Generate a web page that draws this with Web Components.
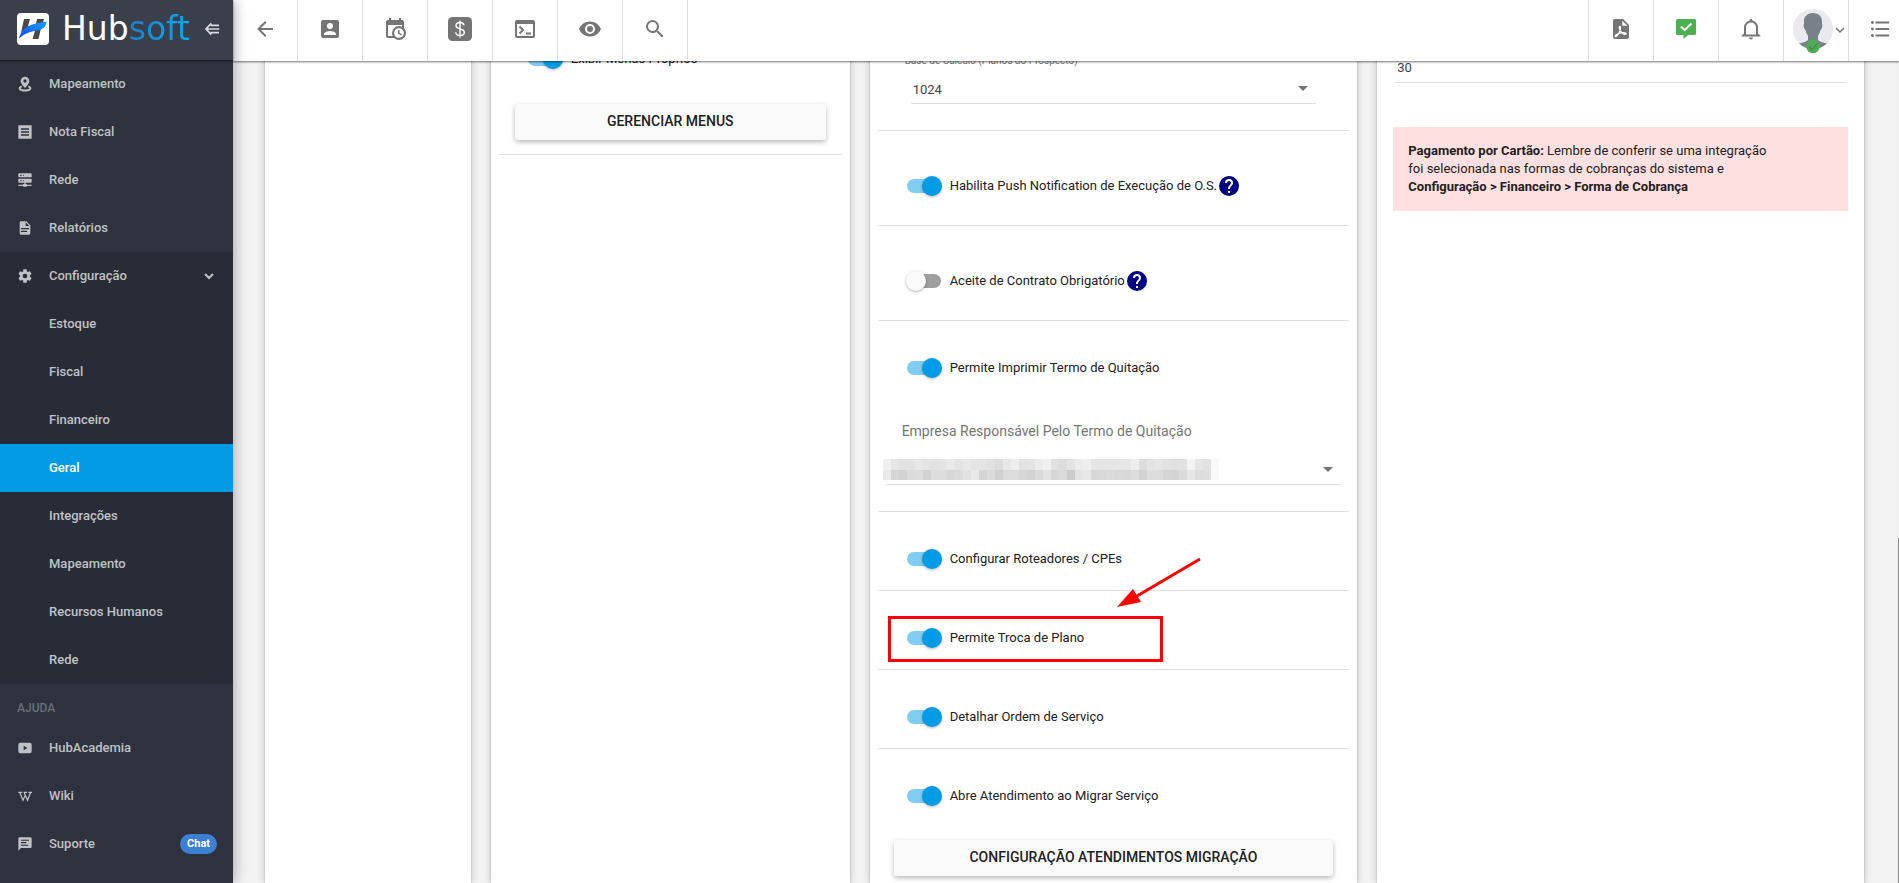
<!DOCTYPE html>
<html lang="pt-BR">
<head>
<meta charset="utf-8">
<title>Hubsoft - Configuração Geral</title>
<style>
  body { margin: 0; font-family: Roboto, "Liberation Sans", sans-serif; font-size: 13px; color: #212121; }
</style>
</head>
<body>
<hub-app>
  <hub-sidebar slot="sidebar">
    <nav-item icon="pin">Mapeamento</nav-item>
    <nav-item icon="receipt">Nota Fiscal</nav-item>
    <nav-item icon="server">Rede</nav-item>
    <nav-item icon="doc">Relatórios</nav-item>
    <nav-group>
      <nav-item icon="gear" expandable>Configuração</nav-item>
      <nav-item>Estoque</nav-item>
      <nav-item>Fiscal</nav-item>
      <nav-item>Financeiro</nav-item>
      <nav-item active>Geral</nav-item>
      <nav-item>Integrações</nav-item>
      <nav-item>Mapeamento</nav-item>
      <nav-item>Recursos Humanos</nav-item>
      <nav-item>Rede</nav-item>
    </nav-group>
    <nav-heading>AJUDA</nav-heading>
    <nav-item icon="video">HubAcademia</nav-item>
    <nav-item icon="wiki">Wiki</nav-item>
    <nav-item icon="message" badge="Chat">Suporte</nav-item>
  </hub-sidebar>

  <hub-toolbar slot="toolbar">
    <tool-button icon="back" label="Voltar"></tool-button>
    <tool-button icon="account" label="Clientes"></tool-button>
    <tool-button icon="schedule" label="Agenda"></tool-button>
    <tool-button icon="money" label="Financeiro"></tool-button>
    <tool-button icon="console" label="Console"></tool-button>
    <tool-button icon="eye" label="Visualizar"></tool-button>
    <tool-button icon="search" label="Pesquisar"></tool-button>
    <tool-button slot="end" icon="pdf" label="Relatórios PDF"></tool-button>
    <tool-button slot="end" icon="check" label="Atendimentos"></tool-button>
    <tool-button slot="end" icon="bell" label="Notificações"></tool-button>
    <tool-button slot="end" icon="avatar" label="Perfil" wide></tool-button>
    <tool-button slot="end" icon="list" label="Menu" last></tool-button>
  </hub-toolbar>

  <hub-card></hub-card>

  <hub-card>
    <setting-row first>
      <hub-toggle checked>Exibir Menus Próprios</hub-toggle>
      <hub-button spaced>Gerenciar Menus</hub-button>
    </setting-row>
  </hub-card>

  <hub-card>
    <setting-row first>
      <hub-select label="Base de Cálculo (Planos do Prospecto)" value="1024" inset></hub-select>
    </setting-row>
    <setting-row tall>
      <hub-toggle checked help>Habilita Push Notification de Execução de O.S.</hub-toggle>
    </setting-row>
    <setting-row tall>
      <hub-toggle help>Aceite de Contrato Obrigatório</hub-toggle>
    </setting-row>
    <setting-row end-flush>
      <hub-toggle checked>Permite Imprimir Termo de Quitação</hub-toggle>
      <hub-select label="Empresa Responsável Pelo Termo de Quitação" redacted></hub-select>
    </setting-row>
    <setting-row>
      <hub-toggle checked>Configurar Roteadores / CPEs</hub-toggle>
    </setting-row>
    <setting-row>
      <hub-toggle checked>Permite Troca de Plano</hub-toggle>
      <hub-callout></hub-callout>
    </setting-row>
    <setting-row>
      <hub-toggle checked>Detalhar Ordem de Serviço</hub-toggle>
    </setting-row>
    <setting-row open>
      <hub-toggle checked>Abre Atendimento ao Migrar Serviço</hub-toggle>
      <hub-button>Configuração Atendimentos Migração</hub-button>
    </setting-row>
  </hub-card>

  <hub-card>
    <hub-input label="Dias" value="30"></hub-input>
    <hub-alert><b>Pagamento por Cartão:</b> Lembre de conferir se uma integração<br>foi selecionada nas formas de cobranças do sistema e<br><b>Configuração &gt; Financeiro &gt; Forma de Cobrança</b></hub-alert>
  </hub-card>
</hub-app>

<script>
const ICONS = {
  pin: '<path fill-rule="evenodd" d="M12 1a6.500 6.500 0 0 1 6.500 6.500C18.500 12 12 18 12 18S5.500 12 5.500 7.500A6.500 6.500 0 0 1 12 1zm0 4a2.500 2.500 0 1 0 0 5 2.500 2.500 0 0 0 0-5z"/><path d="M7 15.500c-6 2.500-3 6.300 5 6.300s11-3.800 5-6.300" fill="none" stroke="currentColor" stroke-width="2.800"/>',
  receipt: '<path fill-rule="evenodd" d="M2 2h20v20H2zM6 6.500v2h12v-2zM6 11v2h12v-2zM6 15.500v2h12v-2z"/>',
  server: '<path fill-rule="evenodd" d="M13 18h1a1 1 0 0 1 1 1h7v2h-7a1 1 0 0 1-1 1h-4a1 1 0 0 1-1-1H2v-2h7a1 1 0 0 1 1-1h1v-2H3a1 1 0 0 1-1-1v-4a1 1 0 0 1 1-1h18a1 1 0 0 1 1 1v4a1 1 0 0 1-1 1h-8zM3 2h18a1 1 0 0 1 1 1v4a1 1 0 0 1-1 1H3a1 1 0 0 1-1-1V3a1 1 0 0 1 1-1zm6 4h1V4H9zm0 8h1v-2H9zM5 4v2h2V4zm0 8v2h2v-2z"/>',
  doc: '<path fill-rule="evenodd" d="M13 9h5.500L13 3.500zM6 2h8l6 6v12a2 2 0 0 1-2 2H6a2 2 0 0 1-2-2V4a2 2 0 0 1 2-2zm9 16v-2H6v2zm3-4v-2H6v2z"/>',
  gear: '<path fill-rule="evenodd" d="M12,15.500A3.500,3.500 0 0,1 8.500,12A3.500,3.500 0 0,1 12,8.500A3.500,3.500 0 0,1 15.500,12A3.500,3.500 0 0,1 12,15.500M19.430,12.970C19.470,12.650 19.500,12.330 19.500,12C19.500,11.670 19.470,11.340 19.430,11L21.540,9.370C21.730,9.220 21.780,8.950 21.660,8.730L19.660,5.270C19.540,5.050 19.270,4.960 19.050,5.050L16.560,6.050C16.040,5.660 15.500,5.320 14.870,5.070L14.500,2.420C14.460,2.180 14.250,2 14,2H10C9.750,2 9.540,2.180 9.500,2.420L9.130,5.070C8.500,5.320 7.960,5.660 7.440,6.050L4.950,5.050C4.730,4.960 4.460,5.050 4.340,5.270L2.340,8.730C2.210,8.950 2.270,9.220 2.460,9.370L4.570,11C4.530,11.340 4.500,11.670 4.500,12C4.500,12.330 4.530,12.650 4.570,12.970L2.460,14.630C2.270,14.780 2.210,15.050 2.340,15.270L4.340,18.730C4.460,18.950 4.730,19.030 4.950,18.950L7.440,17.940C7.960,18.340 8.500,18.680 9.130,18.930L9.500,21.580C9.540,21.820 9.750,22 10,22H14C14.250,22 14.460,21.820 14.500,21.580L14.870,18.930C15.500,18.670 16.040,18.340 16.560,17.940L19.050,18.950C19.270,19.030 19.540,18.950 19.660,18.730L21.660,15.270C21.780,15.050 21.730,14.780 21.540,14.630L19.430,12.970Z"/>',
  video: '<path fill-rule="evenodd" d="M5 4h14a3 3 0 0 1 3 3v10a3 3 0 0 1-3 3H5a3 3 0 0 1-3-3V7a3 3 0 0 1 3-3zm5 4.500v7l5.500-3.500z"/>',
  wiki: '<path d="M2 6.500h6M10 6.500h5M17 6.500h5.500M4 6.500l5 12 3.500-8M10.500 6.500l5.300 12 4.700-12" fill="none" stroke="currentColor" stroke-width="1.800"/>',
  message: '<path fill-rule="evenodd" d="M20 2a2 2 0 0 1 2 2v12a2 2 0 0 1-2 2H6l-4 4V4a2 2 0 0 1 2-2zM6 5.500v1.800h12V5.500zM6 9v2h8V9zm0 4v1.800h11V13z"/>',
  chevron: '<path d="M6 9l6 6 6-6" fill="none" stroke="currentColor" stroke-width="3"/>',
  back: '<path d="M20,11V13H8L13.500,18.500L12.080,19.920L4.160,12L12.080,4.080L13.500,5.500L8,11H20Z"/>',
  account: '<path fill-rule="evenodd" d="M6,17C6,15 10,13.900 12,13.900C14,13.900 18,15 18,17V18H6M15,9A3,3 0 0,1 12,12A3,3 0 0,1 9,9A3,3 0 0,1 12,6A3,3 0 0,1 15,9M3,5V19A2,2 0 0,0 5,21H19A2,2 0 0,0 21,19V5A2,2 0 0,0 19,3H5C3.890,3 3,3.900 3,5Z"/>',
  schedule: '<path fill-rule="evenodd" d="M15,13H16.500V15.820L18.940,17.230L18.190,18.530L15,16.690V13M19,8H5V19H9.670C9.240,18.090 9,17.070 9,16A7,7 0 0,1 16,9C17.070,9 18.090,9.240 19,9.670V8M5,21C3.890,21 3,20.100 3,19V5C3,3.890 3.890,3 5,3H6V1H8V3H16V1H18V3H19A2,2 0 0,1 21,5V11.100C22.240,12.360 23,14.090 23,16A7,7 0 0,1 16,23C14.090,23 12.360,22.240 11.100,21H5M16,11.150A4.850,4.850 0 0,0 11.150,16C11.150,18.680 13.320,20.850 16,20.850A4.850,4.850 0 0,0 20.850,16C20.850,13.320 18.680,11.150 16,11.150Z"/>',
  money: '<rect width="24" height="24" rx="4.500"/><path d="M16 8.200C15.500 6.300 14 5.500 12 5.500c-2.300 0-4 1.200-4 3.100 0 4.600 8.300 2.200 8.300 6.700 0 2-1.800 3.200-4.200 3.200-2.500 0-4.100-1.100-4.500-3.100M12 3.500v17" fill="none" stroke="#fff" stroke-width="1.400"/>',
  console: '<path fill-rule="evenodd" d="M4 3h16a2 2 0 0 1 2 2v14a2 2 0 0 1-2 2H4a2 2 0 0 1-2-2V5a2 2 0 0 1 2-2zm0 4v12h16V7z"/><path d="M6.500 9.500L10 13l-3.500 3.500M13 16.500h5" fill="none" stroke="currentColor" stroke-width="2"/>',
  eye: '<path fill-rule="evenodd" d="M12,9A3,3 0 0,0 9,12A3,3 0 0,0 12,15A3,3 0 0,0 15,12A3,3 0 0,0 12,9M12,17A5,5 0 0,1 7,12A5,5 0 0,1 12,7A5,5 0 0,1 17,12A5,5 0 0,1 12,17M12,4.500C7,4.500 2.730,7.610 1,12C2.730,16.390 7,19.500 12,19.500C17,19.500 21.270,16.390 23,12C21.270,7.610 17,4.500 12,4.500Z"/>',
  search: '<path fill-rule="evenodd" d="M9.500,3A6.500,6.500 0 0,1 16,9.500C16,11.110 15.410,12.590 14.440,13.730L14.710,14H15.500L20.500,19L19,20.500L14,15.500V14.710L13.730,14.440C12.590,15.410 11.110,16 9.500,16A6.500,6.500 0 0,1 3,9.500A6.500,6.500 0 0,1 9.500,3M9.500,5C7,5 5,7 5,9.500C5,12 7,14 9.500,14C12,14 14,12 14,9.500C14,7 12,5 9.500,5Z"/>',
  pdf: '<path d="M6 2h8l6 6v12a2 2 0 0 1-2 2H6a2 2 0 0 1-2-2V4a2 2 0 0 1 2-2z"/><path d="M13.300 3.700V8.800h5.100z" fill="#fff"/><path d="M11 9.500c-1.300 0-.8 2.600.7 4.800 1.600 2.300 4.200 3.500 5.200 2.800 1.200-1-2.400-2-5.900-1-3.300.9-5.400 2.700-4.800 3.400.9 1 3.500-2.700 4.500-5.100.8-2 1.100-4.900.3-4.900z" fill="none" stroke="#fff" stroke-width="1.300"/>',
  check: '<path fill="#4caf50" d="M3.500 2h17A1.500 1.500 0 0 1 22 3.500v13a1.500 1.500 0 0 1-1.500 1.500H14l-4.500 4v-4h-6A1.500 1.500 0 0 1 2 16.500v-13A1.500 1.500 0 0 1 3.500 2z"/><path d="M7 9.500l3.700 3.700L17.500 6.500" fill="none" stroke="#fff" stroke-width="2"/>',
  bell: '<path d="M6 18v-7.500a6 6 0 0 1 12 0V18" fill="none" stroke="currentColor" stroke-width="2"/><path d="M2.500 19.500v-.8L5 16.500v1h14v-1l2.500 2.200v.8zM10 20.500h4a2 2 0 0 1-4 0zM10.500 4.500V3.500a1.500 1.500 0 0 1 3 0v1z"/>',
  list: '<path d="M7 5h15M7 12h15M7 19h15" stroke="currentColor" stroke-width="2.200"/><circle cx="3.700" cy="5" r="1.600"/><circle cx="3.700" cy="12" r="1.600"/><circle cx="3.700" cy="19" r="1.600"/>',
  help: '<path fill-rule="evenodd" d="M15.070,11.250L14.170,12.170C13.450,12.890 13,13.500 13,15H11V14.500C11,13.390 11.450,12.390 12.170,11.670L13.410,10.410C13.780,10.050 14,9.550 14,9C14,7.890 13.100,7 12,7A2,2 0 0,0 10,9H8A4,4 0 0,1 12,5A4,4 0 0,1 16,9C16,9.880 15.640,10.670 15.070,11.250M13,19H11V17H13M12,2A10,10 0 0,0 2,12A10,10 0 0,0 12,22A10,10 0 0,0 22,12C22,6.470 17.500,2 12,2Z"/>',
  collapse: '<path d="M11 3.500L3 12l8 8.500M3 12h20M10 6.500h12.500M10 17.500h12.500" fill="none" stroke="currentColor" stroke-width="2.600"/>'
};
const icon = (name, size) =>
  `<svg width="${size}" height="${size}" viewBox="0 0 24 24" fill="currentColor" aria-hidden="true">${ICONS[name]}</svg>`;

const BASE = ':host,*{box-sizing:border-box}svg{display:block;flex:none}button,select,input{font:inherit;color:inherit}';
function define(name, render) {
  customElements.define(name, class extends HTMLElement {
    connectedCallback() {
      if (this.shadowRoot) return;
      const root = this.attachShadow({ mode: 'open' });
      root.innerHTML = `<style>${BASE}</style>` + render(this);
    }
  });
}

define('hub-app', () => `
  <style>
    :host{display:grid;grid-template:61px 1fr / 233px 1fr;min-height:100vh;background:#f3f3f3;overflow:hidden;position:relative}
    ::slotted([slot=sidebar]){grid-area:1/1/3/2;z-index:3}
    ::slotted([slot=toolbar]){grid-area:1/2/2/3;z-index:2}
    main{grid-area:1/2/3/3;display:grid;grid-template-columns:206fr 359fr 488fr 487fr;column-gap:20px;padding:0 35px 0 32px;min-width:0}
    .scroll{position:absolute;right:0;top:61px;bottom:0;width:3px;background:#f0f0f0}
    .scroll::after{content:"";position:absolute;right:0;top:58%;bottom:0;width:1px;background:#8b8b8b}
  </style>
  <slot name="sidebar"></slot><slot name="toolbar"></slot>
  <main><slot></slot></main><div class="scroll"></div>`);

define('hub-sidebar', () => `
  <style>
    :host{display:block;background:#2d323e;box-shadow:0 0 14px rgba(0,0,0,.38);color:#c0c1c5}
    header{height:60px;display:flex;align-items:center;padding:0 13px 2px 17px;background:#3a3f4b;box-shadow:0 1px 2px rgba(0,0,0,.5);position:relative}
    .name{font-family:"DejaVu Sans",sans-serif;font-size:33px;line-height:40px;margin-left:13px;flex:1;color:#fff}
    .name span{background:linear-gradient(90deg,#1b80cc,#06aaf0);-webkit-background-clip:text;background-clip:text;color:transparent}
    button{border:0;background:none;padding:0;color:#d8d9dc}
  </style>
  <header>
    <svg width="32" height="32" viewBox="0 0 32 32" aria-hidden="true">
      <defs><linearGradient id="g" x1="0" y1="1" x2="1" y2="0"><stop offset="0" stop-color="#0a4df2"/><stop offset="1" stop-color="#12a0f5"/></linearGradient></defs>
      <rect width="32" height="32" rx="4" fill="#fff"/>
      <path d="M7 6h6l-2.500 9-6.500 5zM20 6h7l-1 4-7 1zM18.500 16l6-3-3 13h-6z" fill="#4a4a4c"/>
      <path d="M2 26C5 13 14 11 29.500 8.500 29 14 26.500 16 20 17.500 12 19 6 21 2 26z" fill="url(#g)"/>
    </svg>
    <div class="name">Hub<span>soft</span></div>
    <button aria-label="Recolher menu">${icon('collapse', 16)}</button>
  </header>
  <nav><slot></slot></nav>`);

define('nav-group', () => `<style>:host{display:block;background:#282c36}</style><slot></slot>`);

define('nav-heading', () => `
  <style>:host{display:block;padding:0 17px;line-height:48px;height:40px;font-size:12px;font-weight:500;color:#6c6f78}</style><slot></slot>`);

define('nav-item', el => `
  <style>
    :host{display:block;font-weight:500}
    a{display:flex;align-items:center;height:48px;padding:0 16px 0 17px;color:inherit;text-decoration:none}
    .icon{width:16px;margin-right:16px}
    .text{flex:1;line-height:20px}
    :host([active]) a{background:#039be5;color:#fff}
    .badge{background:#3c80d4;color:#fff;border-radius:10px;padding:0 7px;font-size:11px;font-weight:700;line-height:20px}
  </style>
  <a href="#"${el.hasAttribute('active') ? ' aria-current="page"' : ''}>
    <span class="icon">${el.getAttribute('icon') ? icon(el.getAttribute('icon'), 16) : ''}</span>
    <span class="text"><slot></slot></span>
    ${el.hasAttribute('expandable') ? icon('chevron', 16) : ''}
    ${el.hasAttribute('badge') ? `<span class="badge">${el.getAttribute('badge')}</span>` : ''}
  </a>`);

define('hub-toolbar', () => `
  <style>
    :host{display:flex;justify-content:space-between;background:#fff;box-shadow:0 1px 2px rgba(0,0,0,.55)}
    div{display:flex}
    .end{border-left:1px solid #e0e0e0}
  </style>
  <div><slot></slot></div><div class="end"><slot name="end"></slot></div>`);

const AVATAR = `
  <svg width="40" height="46" viewBox="0 0 40 46" aria-hidden="true">
    <defs><clipPath id="c"><circle cx="20" cy="20" r="20"/></clipPath></defs>
    <circle cx="20" cy="20" r="20" fill="#e8eaee"/>
    <g clip-path="url(#c)" fill="#78808a"><path d="M20 4c6 0 9 3.500 9 9v2c1 1 0 5-1.500 6-.5 3-1.500 4-2.500 5.500V31c3 3 8 2 14 6v8H1v-8c6-4 11-3 14-6v-4.500c-1-1.500-2-2.500-2.500-5.500-1.500-1-2.500-5-1.500-6v-3c0-5 4-8 9-8z"/></g>
    <circle cx="20" cy="37.500" r="6.800" fill="#4caf50"/>
    <path d="M16 37.500l3 3 5.500-6" fill="none" stroke="#607d5f" stroke-width="1.500"/>
  </svg>`;
define('tool-button', el => {
  const name = el.getAttribute('icon');
  return `
  <style>
    :host{display:block;width:65px;height:61px;border-right:1px solid #e0e0e0}
    :host([last]){width:50px;border:0}
    button{display:flex;align-items:center;justify-content:center;width:100%;height:100%;padding:0 0 3px;border:0;background:none;color:#757575}
    :host([last]) button{justify-content:flex-start;padding-left:20px}
    :host([wide]) button{justify-content:flex-start;padding:2px 0 0 9px;gap:1px}
    :host([wide]) .chev{margin-bottom:4px}
  </style>
  <button aria-label="${el.getAttribute('label')}">
    ${name === 'avatar' ? AVATAR + `<span class="chev"><svg width="12" height="12" viewBox="0 0 12 12" aria-hidden="true"><path d="M2 4l4 4 4-4" fill="none" stroke="currentColor" stroke-width="1.500"/></svg></span>` : icon(name, name === 'list' ? 22 : 24)}
  </button>`;
});

define('hub-card', () => `
  <style>:host{display:block;background:#fff;padding:0 8px;min-width:0;box-shadow:0 1px 8px rgba(0,0,0,.2),0 1px 2px rgba(0,0,0,.22)}</style><slot></slot>`);

define('setting-row', () => `
  <style>
    :host{display:block;position:relative;padding:37px 0 21px;border-bottom:1px solid #e0e0e0}
    :host([tall]){padding:45px 0 29px}
    :host([first]){padding:49px 0 0}
    :host([end-flush]){padding-bottom:0}
    :host([open]){border:0;padding-bottom:0}
  </style><slot></slot>`);

define('hub-toggle', el => `
  <style>
    :host{display:flex;align-items:center;height:20px;padding-left:28px}
    label{display:flex;align-items:center;line-height:20px}
    input{appearance:none;position:relative;width:36px;height:20px;margin:0 8px 0 0;flex:none}
    input::before{content:"";position:absolute;left:1px;top:3px;width:34px;height:14px;border-radius:7px;background:#9e9e9e}
    input::after{content:"";position:absolute;left:0;top:0;width:20px;height:20px;border-radius:50%;background:#fafafa;box-shadow:0 1px 3px rgba(0,0,0,.3)}
    input:checked::before{background:#81cdf2}
    input:checked::after{left:16px;background:#039be5}
    .help{color:#000080}
  </style>
  <label><input type="checkbox"${el.hasAttribute('checked') ? ' checked' : ''}><span><slot></slot></span></label>
  ${el.hasAttribute('help') ? `<span class="help">${icon('help', 24)}</span>` : ''}`);

define('hub-button', () => `
  <style>
    :host{display:block;padding:34px 16px 6px}
    :host([spaced]){padding:35px 16px 14px}
    button{display:block;width:100%;height:36px;padding:0 0 2px;border:0;border-radius:3px;background:#fafafa;font-size:14px;font-weight:500;text-transform:uppercase;box-shadow:0 2px 5px rgba(0,0,0,.28)}
  </style><button><slot></slot></button>`);

const MOSAIC = [
  'f0 e5 e1 e2 e7 e4 e2 e4 e9 e3 e8 e4 e4 e1 dc e7 ee e1 e3 eb f0 e1 dc e4 ec ef e6 e5 e5 e6 e6 ed dd e3 e6 e2 e0 e1 f3 e6 e1 f9',
  'ea d5 d2 db dc d2 dc dc d8 db e1 e9 d4 db d0 dc dc d7 d3 da e3 d6 db cc e3 e8 d8 d9 db d9 d8 dd d3 dc dc d5 d4 da e6 dd de f9'
].map(r => r.split(' '));
const mosaic = () => `<svg class="mosaic" width="336" height="21" shape-rendering="crispEdges" aria-hidden="true">` +
  MOSAIC.map((row, y) => row.map((c, x) =>
    `<rect x="${x * 8}" y="${y * 11}" width="8" height="${y ? 10 : 11}" fill="#${c}${c}${c}"/>`).join('')).join('') + '</svg>';

define('hub-select', el => `
  <style>
    :host{display:block;padding:0 8px 26px}
    label{display:block;padding-left:16px;margin:43px 0 10px;font-size:14px;line-height:20px;color:#757575}
    .box{position:relative}
    select{appearance:none;display:block;width:100%;height:34px;padding:6px 2px 0;border:0;border-bottom:1px solid #e0e0e0;border-radius:0;background:none;color:#424242}
    .arrow{position:absolute;right:8px;top:16px;border:5px solid transparent;border-top-color:#757575;border-bottom:0;pointer-events:none}
    .mosaic{position:absolute;left:-3px;top:8px}
    :host([inset]){padding:2px 33px 26px}
    :host([inset]) label{margin:0 0 -1px -22px;font-size:10px}
  </style>
  <label for="s">${el.getAttribute('label')}</label>
  <div class="box">
    <select id="s"><option>${el.getAttribute('value') || ''}</option></select>
    ${el.hasAttribute('redacted') ? mosaic() : ''}
    <span class="arrow"></span>
  </div>`);

define('hub-input', el => `
  <style>
    :host{display:block;padding:54px 10px 0}
    input{display:block;width:100%;height:29px;padding:0 2px 1px;border:0;border-bottom:1px solid #e0e0e0;background:none;outline:0;color:#424242}
  </style>
  <input aria-label="${el.getAttribute('label')}" value="${el.getAttribute('value')}">`);

define('hub-alert', () => `
  <style>:host{display:block;margin:44px 8px 0;padding:15px;background:#fee0e0;line-height:18px}</style>
  <div role="alert"><slot></slot></div>`);

define('hub-callout', () => `
  <style>
    :host{display:block;position:absolute;left:10px;top:25px;width:275px;height:46px;border:3px solid #f00;pointer-events:none}
    svg{position:absolute;left:222px;top:-64px}
  </style>
  <svg width="92" height="56" viewBox="0 0 92 56" aria-hidden="true">
    <path d="M87 4L24 41" stroke="#f00" stroke-width="3"/><path d="M4 52L20 34l8 13z" fill="#f00"/>
  </svg>`);
</script>
</body>
</html>
